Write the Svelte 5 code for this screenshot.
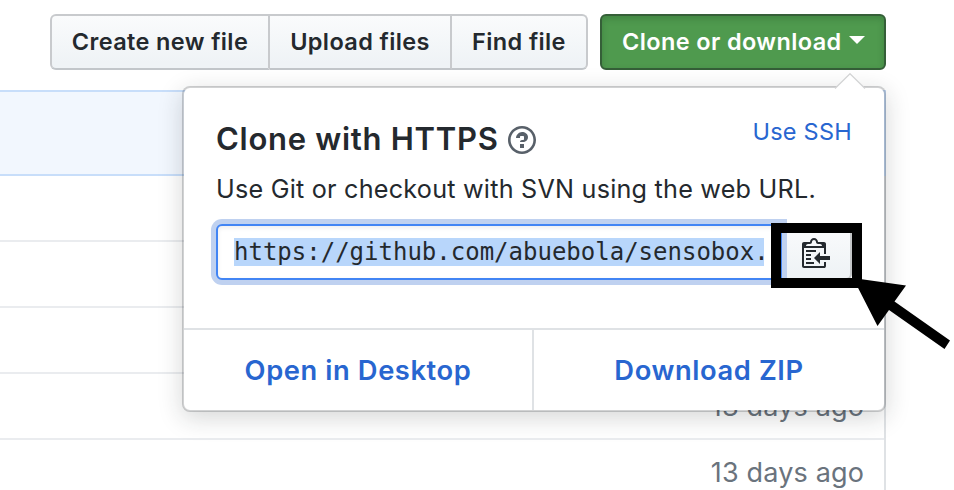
<script>
  const actions = [
    { label: 'Create new file', width: 220 },
    { label: 'Upload files', width: 182 },
    { label: 'Find file', width: 136 },
  ];
  const rows = ['', '', '', '13 days ago', '13 days ago'];
</script>

<main>
  <div class="toolbar">
    <div class="group">
      {#each actions as action}
        <button class="btn" style="width: {action.width}px"><span>{action.label}</span></button>
      {/each}
    </div>
    <button class="btn primary"><span>Clone or download</span><i class="caret"></i></button>
  </div>

  <div class="files">
    <div class="commit"></div>
    {#each rows as age}
      <div class="row"><span>{age}</span></div>
    {/each}
  </div>

  <section class="popover">
    <svg class="tip" width="32" height="16" viewBox="0 0 32 16">
      <path d="M1 15.5 16 .5 31 15.5V16H1Z" fill="#fff" />
      <path d="M1 15.5 16 .7 31 15.5" fill="none" stroke="#d2d3d4" stroke-width="1.2" />
    </svg>
    <div class="body">
      <div class="heading">
        <h4>Clone with HTTPS</h4>
        <svg width="28" height="32" viewBox="0 0 14 16" fill="#586069">
          <path fill-rule="evenodd" d="M6 10h2v2H6v-2zm4-3.5C10 8.64 8 9 8 9H6c0-.55.45-1 1-1h.5c.28 0 .5-.22.5-.5v-1c0-.28-.22-.5-.5-.5h-1c-.28 0-.5.22-.5.5V7H4c0-1.5 1.5-3 3-3s3 1 3 2.5zM7 2.3c3.14 0 5.7 2.56 5.7 5.7s-2.56 5.7-5.7 5.7A5.71 5.71 0 0 1 1.3 8c0-3.14 2.56-5.7 5.7-5.7zM7 1C3.14 1 0 4.14 0 8s3.14 7 7 7 7-3.14 7-7-3.14-7-7-7z" />
        </svg>
        <a class="ssh" href="#ssh">Use SSH</a>
      </div>
      <p>Use Git or checkout with SVN using the web URL.</p>
      <div class="clone">
        <div class="url"><span>https://github.com/abuebola/sensobox.</span></div>
        <button class="copy" aria-label="Copy">
          <svg width="28" height="32" viewBox="0 0 14 16" fill="#24292e">
            <path fill-rule="evenodd" d="M2 13h4v1H2v-1zm5-6H2v1h5V7zm2 3V8l-3 3 3 3v-2h5v-2H9zM4.5 9H2v1h2.5V9zM2 12h2.5v-1H2v1zm9 1h1v2c-.02.28-.11.52-.3.7-.19.18-.42.28-.7.3H1c-.55 0-1-.45-1-1V4c0-.55.45-1 1-1h3c0-1.11.89-2 2-2 1.11 0 2 .89 2 2h3c.55 0 1 .45 1 1v5h-1V6H1v9h10v-2zM2 5h8c0-.55-.45-1-1-1H8c-.55 0-1-.45-1-1s-.45-1-1-1-1 .45-1 1-.45 1-1 1H3c-.55 0-1 .45-1 1z" />
          </svg>
        </button>
      </div>
    </div>
    <footer>
      <a href="#desktop" class="desktop">Open in Desktop</a>
      <a href="#zip" class="zip">Download ZIP</a>
    </footer>
  </section>

  <svg class="callout" width="190" height="140" viewBox="764 216 190 140">
    <rect x="776" y="228" width="81" height="55" fill="none" stroke="#000" stroke-width="10" />
    <path d="M853 278 906 285.5 894.5 301.5 950 340.5 944.5 349 889 310 877.5 326Z" />
  </svg>
</main>

<style>
  :global(body) { background: #fff; }
  * { box-sizing: border-box; }
  main {
    position: relative;
    width: 954px;
    height: 490px;
    overflow: hidden;
    font-family: Inter, 'Noto Sans', sans-serif;
    color: #24292e;
  }
  a { text-decoration: none; color: #2866d0; }
  .toolbar {
    display: flex;
    justify-content: flex-end;
    gap: 12px;
    width: 886px;
    padding-top: 14px;
  }
  .group { display: flex; }
  .btn {
    height: 56px;
    padding: 0;
    border: 2px solid #c8cacd;
    border-bottom-color: #c2c6ca;
    background: linear-gradient(#fafbfc, #eff3f6 90%);
    font: 600 23.5px/52px Inter, sans-serif;
    letter-spacing: .38px;
    color: #24292e;
    white-space: nowrap;
  }
  .group .btn + .btn { border-left: 0; }
  .group .btn:first-child { border-radius: 6px 0 0 6px; }
  .group .btn:last-child { border-radius: 0 6px 6px 0; }
  .primary {
    display: flex;
    align-items: center;
    width: 286px;
    padding-left: 20px;
    border-color: #355f38;
    border-radius: 6px;
    background: #4f9a4e;
    box-shadow: inset 0 3px 6px rgba(27, 70, 35, .25);
    color: #fff;
  }
  .caret {
    margin: -4px 0 0 7px;
    border: 8px solid transparent;
    border-top-color: #fff;
    border-bottom: 0;
  }
  .files {
    width: 886px;
    margin-top: 20px;
    border-right: 2px solid #dfe2e5;
  }
  .commit {
    width: 886px;
    height: 86px;
    border: 2px solid #c8defa;
    border-left: 0;
    background: #f2f7fe;
  }
  .row {
    display: flex;
    justify-content: flex-end;
    height: 66px;
    padding-right: 20px;
    border-bottom: 2px solid #eaecef;
    font-size: 27px;
    line-height: 66px;
    letter-spacing: .15px;
    color: #6a737d;
  }
  .popover {
    position: absolute;
    left: 182px;
    top: 86px;
    width: 704px;
    height: 326px;
    border: 2px solid rgba(27, 31, 35, .2);
    border-radius: 8px;
    background: #fff;
    background-clip: padding-box;
    box-shadow: 0 6px 24px rgba(27, 31, 35, .18);
  }
  .tip { position: absolute; left: 650px; top: -15px; }
  .body { height: 240px; padding: 34px 32px 0; }
  .heading { display: flex; align-items: center; height: 36px; }
  h4 {
    margin: -2px 9px 0 0;
    font-size: 31px;
    line-height: 36px;
    font-weight: 600;
    letter-spacing: .72px;
    white-space: nowrap;
  }
  .ssh { margin: -18px 0 0 auto; font-size: 23.5px; letter-spacing: .25px; }
  p {
    margin: 14px 0 18px;
    font-size: 25.2px;
    line-height: 34px;
    letter-spacing: .22px;
    white-space: nowrap;
  }
  .clone { display: flex; height: 56px; }
  .url {
    position: relative;
    z-index: 1;
    width: 566px;
    padding: 12px 16px;
    border: 2px solid #4285f4;
    border-radius: 6px 0 0 6px;
    background: #fff;
    box-shadow: 0 0 0 5px #bfd1f0, inset 0 2px 4px rgba(27, 31, 35, .08);
  }
  .url span {
    display: block;
    width: 530px;
    background: #b8d6fb;
    font: 24px/28px 'DejaVu Sans Mono', monospace;
    white-space: nowrap;
  }
  .copy {
    flex: 1;
    display: flex;
    align-items: center;
    padding: 0 0 0 20px;
    border: 2px solid #c4c6c8;
    border-left: 0;
    border-radius: 0 6px 6px 0;
    background: linear-gradient(#fafbfc, #eff3f6 90%);
  }
  footer { display: flex; height: 82px; border-top: 2px solid #dfe2e5; }
  footer a {
    width: 50%;
    text-align: center;
    font-weight: 600;
    font-size: 27.3px;
    line-height: 82px;
    height: 80px;
    letter-spacing: .6px;
  }
  .desktop { border-right: 2px solid #dfe2e5; }
  .callout { position: absolute; z-index: 2; left: 764px; top: 216px; }
</style>
